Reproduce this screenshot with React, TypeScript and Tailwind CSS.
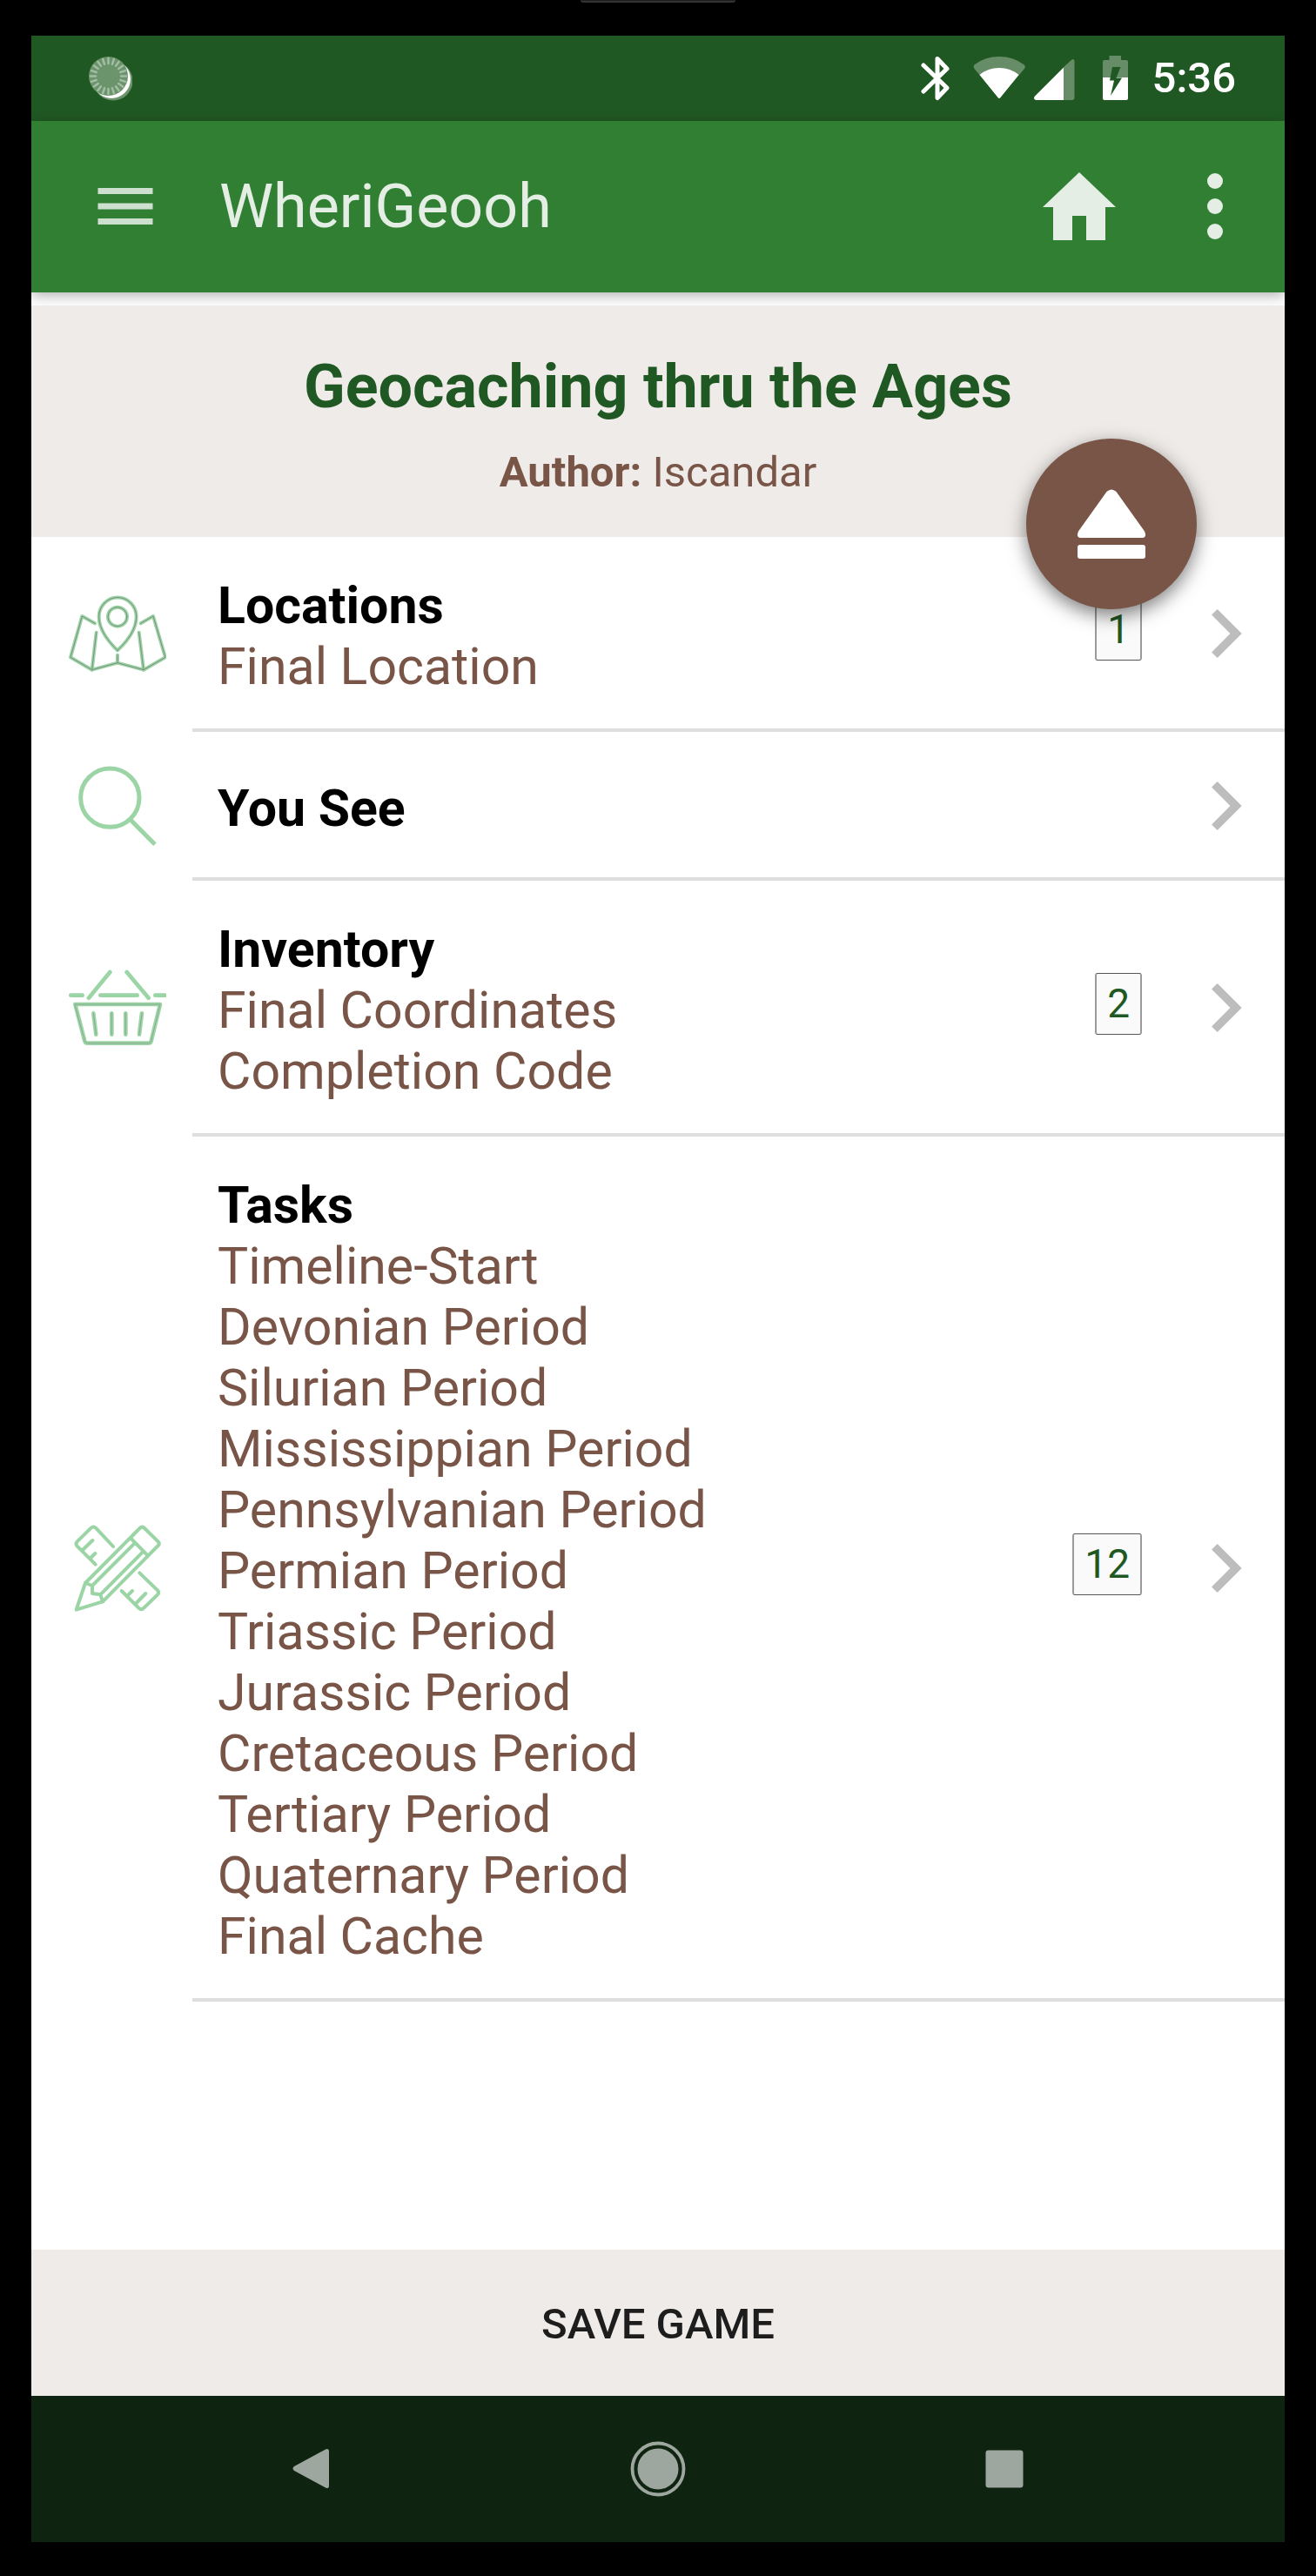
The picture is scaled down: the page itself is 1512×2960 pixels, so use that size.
import React, { useState } from "react";

type Section = {
  id: string;
  title: string;
  items: string[];
  icon: React.ReactNode;
};

const LINE = "#9bd4a5";

const MapIcon = () => {
  const shape = (
    <>
      <path d="M148 169L104 144L64 286L138 329L226 305L316 329L391 286L349 144L306 169" />
      <path d="M153 200L138 329M300 200L316 329M226 278V305" />
      <path d="M226 262C195 232 162 190 162 146A64 66 0 0 1 291 146C291 190 258 232 226 262Z" />
      <circle cx="226" cy="146" r="33" />
    </>
  );
  return (
    <svg
      viewBox="58 36 336 336"
      className="h-28 w-28"
      fill="none"
      strokeLinecap="round"
      strokeLinejoin="round"
    >
      <g stroke={LINE} strokeWidth="12">
        {shape}
      </g>
      <g stroke="#7d8f80" strokeWidth="3">
        {shape}
      </g>
    </svg>
  );
};

const SearchIcon = () => (
  <svg
    viewBox="58 30 336 336"
    className="h-28 w-28"
    fill="none"
    stroke={LINE}
    strokeWidth="15"
  >
    <circle cx="200" cy="170" r="101" />
    <path d="M270 245L355 331" />
  </svg>
);

const BasketIcon = () => {
  const shape = (
    <>
      <path d="M80 193H373L342 320Q340 327 333 327H122Q115 327 113 320Z" />
      <path d="M143 224L152 297M206 224V297M254 224V297M310 224L301 297" />
    </>
  );
  return (
    <svg
      viewBox="58 37 336 336"
      className="h-28 w-28"
      fill="none"
      strokeLinecap="round"
      strokeLinejoin="round"
    >
      <g stroke={LINE} strokeWidth="14">
        {shape}
        <path d="M65 162H105M167 162H294M356 162H389M127 171L200 82M258 82L333 171" />
      </g>
      <g stroke="#8aab90" strokeWidth="3">
        {shape}
      </g>
    </svg>
  );
};

const TasksIcon = () => (
  <svg
    viewBox="58 49 336 336"
    className="h-28 w-28"
    fill="none"
    stroke={LINE}
    strokeWidth="12"
    strokeLinecap="round"
    strokeLinejoin="round"
  >
    {/* ruler */}
    <path d="M150 204L87 141Q80 133 87 125L135 78Q143 71 151 78L211 142" />
    <path d="M106 154L140 121M132 183L149 166" />
    <path d="M240 295L299 354Q308 363 317 354L364 308Q371 301 364 293L302 233" />
    <path d="M260 312L277 295M288 340L323 304" />
    {/* pencil */}
    <path d="M84 360L115 268L303 79Q311 71 319 79L366 125Q373 132 366 139L175 332Z" />
    <path d="M273 115L330 173M115 268L139 277V304L167 308L175 332M139 277L287 129M167 308L316 158" />
  </svg>
);

const sections: Section[] = [
  {
    id: "locations",
    title: "Locations",
    items: ["Final Location"],
    icon: <MapIcon />,
  },
  { id: "yousee", title: "You See", items: [], icon: <SearchIcon /> },
  {
    id: "inventory",
    title: "Inventory",
    items: ["Final Coordinates", "Completion Code"],
    icon: <BasketIcon />,
  },
  {
    id: "tasks",
    title: "Tasks",
    items: [
      "Timeline-Start",
      "Devonian Period",
      "Silurian Period",
      "Mississippian Period",
      "Pennsylvanian Period",
      "Permian Period",
      "Triassic Period",
      "Jurassic Period",
      "Cretaceous Period",
      "Tertiary Period",
      "Quaternary Period",
      "Final Cache",
    ],
    icon: <TasksIcon />,
  },
];

const ticks = Array.from({ length: 20 }, (_, i) => i * 18);

const StatusBar = () => (
  <div className="flex h-[98px] items-center justify-between bg-[#205823] pr-14 pl-16">
    <svg viewBox="0 0 52 52" className="h-[52px] w-[52px]">
      <circle cx="30" cy="29" r="22.5" fill="#6b936c" />
      <circle cx="28" cy="27" r="22" fill="#fff" />
      <circle cx="24.5" cy="23.5" r="22.5" fill="#6b936c" />
      <g stroke="#a3bda3" strokeWidth="2.5" strokeLinecap="round">
        {ticks.map((deg) => (
          <path key={deg} d="M24.5 3V9" transform={`rotate(${deg} 24.5 23.5)`} />
        ))}
      </g>
    </svg>
    <div className="flex items-center">
      <svg viewBox="1056 64 240 52" className="h-[52px] w-[240px]">
        <path
          d="M1061 75L1088 101L1077 112.5V67.5L1088 79L1061 105"
          fill="none"
          stroke="#fff"
          strokeWidth="5"
          strokeLinecap="round"
          strokeLinejoin="round"
        />
        <path
          d="M1148 113L1119.5 79Q1117.5 76 1120 74Q1132 65 1148 65T1176 74Q1179 76 1177 79Z"
          fill="#668c68"
        />
        <path
          d="M1146.5 112L1125.5 86Q1135 78 1148 78T1170.500 86L1149.5 112Q1148 114 1146.5 112Z"
          fill="#fff"
        />
        <path
          d="M1222 77L1231 69Q1234.5 66.5 1234.5 71V112Q1234.5 115 1231.5 115H1222Z"
          fill="#668c68"
        />
        <path d="M1222 77.5V115H1190.5Q1187 114.5 1188.5 111Z" fill="#fff" />
        <path
          d="M1267 89V71Q1267 69 1269 69H1274.5V64H1288V69H1294Q1296 69 1296 71V89Z"
          fill="#668c68"
        />
        <path
          d="M1267 89H1296V113Q1296 115 1294 115H1269Q1267 115 1267 113Z"
          fill="#fff"
        />
        <path
          d="M1278 77H1287.5L1282.5 89.5H1289L1276 110L1280 92.5H1275Z"
          fill="#205823"
        />
      </svg>
      <span className="ml-7 text-[49px] leading-[58px] font-medium text-white">
        5:36
      </span>
    </div>
  </div>
);

const Toolbar = () => (
  <div className="flex h-[197px] items-center bg-[#307f33] pr-[38px] pb-0.5 pl-[66px] text-[#e4eee5] shadow-[0_4px_14px_rgba(0,0,0,0.3)]">
    <button type="button" aria-label="Menu" className="cursor-pointer">
      <svg viewBox="0 0 24 24" className="h-[84px] w-[84px]" fill="#cddfce">
        <path d="M3 6h18v2H3zM3 11h18v2H3zM3 16h18v2H3z" />
      </svg>
    </button>
    <h1 className="ml-[66px] flex-1 text-[70px] leading-[82px]">WheriGeooh</h1>
    <button type="button" aria-label="Home" className="cursor-pointer">
      <svg viewBox="0 0 84 84" className="h-[84px] w-[84px]" fill="currentColor">
        <path d="M42 3L84 43H72V81H50V53H34V81H12V43H0Z" />
      </svg>
    </button>
    <button
      type="button"
      aria-label="More options"
      className="ml-[72px] cursor-pointer"
    >
      <svg viewBox="0 0 84 84" className="h-[84px] w-[84px]" fill="currentColor">
        <circle cx="42" cy="13" r="9" />
        <circle cx="42" cy="42" r="9" />
        <circle cx="42" cy="71" r="9" />
      </svg>
    </button>
  </div>
);

const SectionRow = ({
  section,
  onOpen,
}: {
  section: Section;
  onOpen: (id: string) => void;
}) => (
  <li>
    <button
      type="button"
      className="flex w-full cursor-pointer items-stretch text-left"
      onClick={() => onOpen(section.id)}
    >
      <span className="flex w-[185px] shrink-0 items-center justify-center pb-0.5 pl-3">
        {section.icon}
      </span>
      <span
        className={`flex flex-1 items-center border-b-4 border-[#dedede] pr-3 pl-[29px] ${
          section.items.length ? "pt-11 pb-9" : "min-h-[171px] pt-2"
        }`}
      >
        <span className="flex-1 text-[59px] leading-[70px]">
          <span className="block font-bold text-black">{section.title}</span>
          {section.items.map((item) => (
            <span key={item} className="block text-[#795548]">
              {item}
            </span>
          ))}
        </span>
        {section.items.length > 0 && (
          <span className="mr-10 mb-4 rounded-[3px] border-x-2 border-y border-x-[#9a9a9a] border-y-[#555] bg-[#fafafa] px-3 text-[46px] leading-[69px] text-[#205823]">
            {section.items.length}
          </span>
        )}
        <svg viewBox="0 0 24 24" className="-mt-1.5 h-28 w-28" fill="#bdbdbd">
          <path d="M8.59 16.59L13.17 12 8.59 7.41 10 6l6 6-6 6z" />
        </svg>
      </span>
    </button>
  </li>
);

const NavBar = () => (
  <nav className="flex h-[168px] items-center justify-center bg-[#0e2310] text-[#9ea79f]">
    <button
      type="button"
      aria-label="Back"
      className="flex w-[398px] cursor-pointer justify-center"
    >
      <svg viewBox="0 0 64 64" className="h-16 w-16" fill="currentColor">
        <path d="M12 29L48 9.5Q52 8 52 12V51Q52 55.5 48 53.5L12 34Q9 31.5 12 29Z" />
      </svg>
    </button>
    <button
      type="button"
      aria-label="Home screen"
      className="flex w-[398px] cursor-pointer justify-center"
    >
      <svg viewBox="0 0 64 64" className="h-16 w-16">
        <circle
          cx="32"
          cy="32"
          r="29.5"
          fill="none"
          stroke="currentColor"
          strokeWidth="3.8"
        />
        <circle cx="32" cy="32" r="23.5" fill="currentColor" />
      </svg>
    </button>
    <button
      type="button"
      aria-label="Recent apps"
      className="flex w-[398px] cursor-pointer justify-center"
    >
      <svg viewBox="0 0 64 64" className="h-16 w-16" fill="currentColor">
        <rect x="10.5" y="10.5" width="43" height="43" rx="3" />
      </svg>
    </button>
  </nav>
);

const App = () => {
  const [, setActive] = useState("");

  return (
    <div className="flex min-h-screen flex-col bg-black px-9 font-['Roboto',sans-serif]">
      <div className="flex h-[41px] justify-center">
        <div className="h-[3px] w-[178px] rounded-b-sm border-b-2 border-[#333] bg-[#1c1c1e]" />
      </div>
      <div className="flex flex-1 flex-col bg-white">
        <StatusBar />
        <Toolbar />
        <header className="relative z-10 mt-[15px] bg-[#efebe8] pt-[52px] pb-[45px] text-center">
          <h2 className="text-[70px] leading-[82px] font-bold text-[#205823]">
            Geocaching thru the Ages
          </h2>
          <p className="mt-[29px] text-[49px] leading-[58px] text-[#795548]">
            <b>Author:</b> Iscandar
          </p>
          <button
            type="button"
            aria-label="Eject"
            className="absolute right-[101px] -bottom-[83px] flex h-[196px] w-[196px] cursor-pointer items-center justify-center rounded-full bg-[#795548] shadow-[0_7px_21px_rgba(0,0,0,0.5)]"
          >
            <svg viewBox="0 0 80 80" className="h-20 w-20" fill="#fff">
              <path d="M34.5 3Q40 -2 45.5 3L78 48.5Q81 55.5 75.5 56H4.5Q-1 55.5 2 48.5Z" />
              <rect x="1" y="64" width="78" height="16" rx="3" />
            </svg>
          </button>
        </header>
        <main className="flex-1">
          <ul>
            {sections.map((section) => (
              <SectionRow
                key={section.id}
                section={section}
                onOpen={setActive}
              />
            ))}
          </ul>
        </main>
        <button
          type="button"
          className="h-[168px] w-full cursor-pointer bg-[#efebe8] pt-1 text-[49px] leading-[58px] font-medium text-[#1d1d1d]"
        >
          SAVE GAME
        </button>
        <NavBar />
      </div>
      <div className="h-[39px]" />
    </div>
  );
};

export default App;
